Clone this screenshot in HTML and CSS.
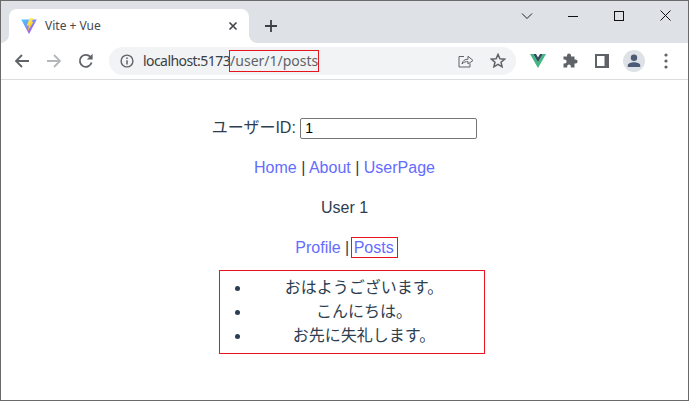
FILE: index.html
```html
<!DOCTYPE html>
<html lang="ja">
<head>
<meta charset="utf-8">
<title>Vite + Vue</title>
<link rel="stylesheet" href="styles.css">
</head>
<body>
<div class="window">
  <div class="tabstrip">
    <div class="tab">
      <svg class="favicon" width="16" height="16" viewBox="0 0 16 16">
        <defs>
          <linearGradient id="vl" x1="0" y1="0" x2="1" y2="1"><stop offset="0" stop-color="#41d1ff"/><stop offset="1" stop-color="#bd34fe"/></linearGradient>
          <linearGradient id="vb" x1="0" y1="0" x2="0.4" y2="1"><stop offset="0" stop-color="#ffea83"/><stop offset="0.5" stop-color="#ffdd35"/><stop offset="1" stop-color="#ffa800"/></linearGradient>
        </defs>
        <path d="M0.2 1.6 L15.8 1.6 L8.3 15.6 Q8 16 7.7 15.6 Z" fill="url(#vl)"/>
        <path d="M8.6 0.2 L12.4 0.2 L10.6 4 L12.6 3.6 L6.8 13.4 L7.8 7.4 L5.6 7.8 Z" fill="url(#vb)"/>
      </svg>
      <span class="tab-title">Vite + Vue</span>
      <svg class="tab-close" width="10" height="10" viewBox="0 0 10 10"><path d="M1.5 1.5 L8.5 8.5 M8.5 1.5 L1.5 8.5" stroke="#45484d" stroke-width="1.7" fill="none"/></svg>
    </div>
    <svg class="new-tab" width="12" height="12" viewBox="0 0 12 12"><path d="M6 0 V12 M0 6 H12" stroke="#3c4043" stroke-width="1.8" fill="none"/></svg>
    <div class="window-controls">
      <span class="win-btn"><svg width="12" height="8" viewBox="0 0 12 8"><path d="M1 1.5 L6 6.5 L11 1.5" stroke="#222" stroke-width="1" fill="none"/></svg></span>
      <span class="win-btn"><svg width="10" height="10" viewBox="0 0 10 10"><path d="M0 5.5 H10" stroke="#111" stroke-width="1" fill="none"/></svg></span>
      <span class="win-btn"><svg width="10" height="10" viewBox="0 0 10 10"><rect x="0.5" y="0.5" width="9" height="9" stroke="#111" stroke-width="1" fill="none"/></svg></span>
      <span class="win-btn"><svg width="11" height="11" viewBox="0 0 11 11"><path d="M0.5 0.5 L10.5 10.5 M10.5 0.5 L0.5 10.5" stroke="#111" stroke-width="1" fill="none"/></svg></span>
    </div>
  </div>
  <div class="toolbar">
    <span class="tool"><svg width="16" height="16" viewBox="0 0 16 16"><path d="M15 8 H2 M8 2 L2 8 L8 14" stroke="#5f6368" stroke-width="1.8" fill="none"/></svg></span>
    <span class="tool"><svg width="16" height="16" viewBox="0 0 16 16"><path d="M1 8 H14 M8 2 L14 8 L8 14" stroke="#b4b7bb" stroke-width="1.8" fill="none"/></svg></span>
    <span class="tool"><svg width="16" height="16" viewBox="0 0 16 16"><path d="M13.6 9.6 A6 6 0 1 1 12.2 3.7" stroke="#5f6368" stroke-width="1.8" fill="none"/><path d="M14.6 0.8 V6.6 H8.8 Z" fill="#5f6368"/></svg></span>
    <div class="omnibox">
      <svg class="info" width="14" height="14" viewBox="0 0 14 14"><circle cx="7" cy="7" r="5.9" stroke="#5f6368" stroke-width="1.4" fill="none"/><path d="M7 6.2 V10.4 M7 3.6 V5" stroke="#5f6368" stroke-width="1.5" fill="none"/></svg>
      <span class="url"><span class="host">localhost:5173</span><span class="path">/user/1/posts</span></span>
      <svg class="omni-share" width="16" height="14" viewBox="0 0 16 14"><path d="M6 2.5 H1 V13 H12 V9.5" stroke="#5f6368" stroke-width="1" fill="none"/><path d="M4 10 C4.5 6.5 7 5.2 10 5.2 V2.2 L15 6.5 L10 10 V7.6 C7.8 7.6 5.6 8 4 10 Z" stroke="#5f6368" stroke-width="1" fill="none"/></svg>
      <svg class="omni-star" width="16" height="15" viewBox="0 0 16 15"><path d="M8 1.4 L9.9 5.7 L14.6 6.1 L11 9.2 L12.1 13.8 L8 11.4 L3.9 13.8 L5 9.2 L1.4 6.1 L6.1 5.7 Z" stroke="#5f6368" stroke-width="1.5" fill="none"/></svg>
    </div>
    <div class="extensions">
      <span class="tool"><svg width="16" height="14" viewBox="0 0 16 14"><path d="M0 0 H3.2 L8 8.2 L12.8 0 H16 L8 14 Z" fill="#41b883"/><path d="M3.2 0 H6 L8 3.5 L10 0 H12.8 L8 8.2 Z" fill="#35495e"/></svg></span>
      <span class="tool"><svg width="15" height="15" viewBox="0 0 15 15"><path d="M0.5 3.5 H4 V2.4 A2 2 0 0 1 8 2.4 V3.5 H11.5 V6.5 H12.6 A2 2 0 0 1 12.6 10.5 H11.5 V14.5 H7.8 V13.2 A1.8 1.8 0 0 0 4.2 13.2 V14.5 H0.5 V10.6 H1.6 A2 2 0 0 0 1.6 6.6 H0.5 Z" fill="#5f6368"/></svg></span>
      <span class="tool"><svg width="14" height="14" viewBox="0 0 14 14"><rect width="14" height="14" fill="#5f6368"/><rect x="2" y="2" width="7.5" height="10" fill="#fff"/></svg></span>
      <span class="tool"><span class="avatar"><svg width="14" height="14" viewBox="0 0 14 14"><circle cx="7" cy="3.8" r="3.2" fill="#4d5b76"/><path d="M0.8 13 V11.4 C0.8 9.2 4.4 8.3 7 8.3 C9.6 8.3 13.2 9.2 13.2 11.4 V13 Z" fill="#4d5b76"/></svg></span></span>
      <span class="tool"><svg width="4" height="16" viewBox="0 0 4 16"><circle cx="2" cy="2" r="1.6" fill="#5f6368"/><circle cx="2" cy="8" r="1.6" fill="#5f6368"/><circle cx="2" cy="14" r="1.6" fill="#5f6368"/></svg></span>
    </div>
  </div>
  <main class="page">
    <p class="row"><label class="id-label">ユーザーID: <input class="id-input" type="text" value="1"></label></p>
    <p class="row"><a class="link" href="#">Home</a> | <a class="link" href="#">About</a> | <a class="link" href="#">UserPage</a></p>
    <p class="row">User 1</p>
    <p class="row"><a class="link" href="#">Profile</a> | <a class="link current" href="#">Posts</a></p>
    <div class="posts">
      <ul class="post-list">
        <li>おはようございます。</li>
        <li>こんにちは。</li>
        <li>お先に失礼します。</li>
      </ul>
    </div>
  </main>
</div>
</body>
</html>
```

FILE: styles.css
```css
* { box-sizing: border-box; }
html, body { margin: 0; padding: 0; background: #fff; }
.window {
  width: 689px;
  height: 401px;
  display: flex;
  flex-direction: column;
  border: 1px solid #6a6a6a;
  overflow: hidden;
  font-family: "Liberation Sans", "Noto Sans CJK JP", sans-serif;
  color: #2c3e50;
}
.tabstrip {
  height: 42px;
  flex: none;
  background: #dee1e6;
  display: flex;
  align-items: flex-end;
  padding-left: 8px;
}
.tab {
  position: relative;
  width: 240px;
  height: 34px;
  background: #fff;
  border-radius: 8px 8px 0 0;
  display: flex;
  align-items: center;
  padding-left: 12px;
  padding-bottom: 1px;
}
.tab::before, .tab::after {
  content: "";
  position: absolute;
  bottom: 0;
  width: 8px;
  height: 8px;
}
.tab::before { left: -8px; background: radial-gradient(circle at 0 0, #dee1e6 7.5px, #fff 8px); }
.tab::after { right: -8px; background: radial-gradient(circle at 100% 0, #dee1e6 7.5px, #fff 8px); }
.favicon { flex: none; }
.tab-title {
  margin: 1px 0 0 8px;
  font: 12px/16px "Noto Sans", sans-serif;
  color: #45484d;
  flex: 1;
}
.tab-close { flex: none; margin-right: 11px; }
.new-tab { flex: none; margin: 0 0 11px 16px; }
.window-controls {
  margin-left: auto;
  align-self: flex-start;
  display: flex;
}
.win-btn {
  width: 46px;
  height: 29px;
  display: flex;
  align-items: center;
  justify-content: center;
}
.toolbar {
  height: 37px;
  flex: none;
  background: #fff;
  border-bottom: 1px solid #dadce0;
  display: flex;
  align-items: center;
  padding: 0 0 1px 5px;
}
.tool {
  width: 32px;
  height: 32px;
  flex: none;
  display: flex;
  align-items: center;
  justify-content: center;
}
.omnibox {
  width: 407px;
  height: 28px;
  margin-left: 7px;
  background: #f1f3f4;
  border-radius: 14px;
  display: flex;
  align-items: center;
  padding-left: 11px;
}
.info { flex: none; }
.url {
  margin-left: 9px;
  font: 14px/18px "Noto Sans", sans-serif;
  white-space: nowrap;
  flex: 1;
}
.host { color: #3c4043; letter-spacing: -0.56px; }
.path {
  color: #5f6368;
  border: 1px solid #e8141c;
  padding: 0 0 1px;
  margin: 0 -1px;
}
.omni-share { flex: none; margin-right: 16px; }
.omni-star { flex: none; margin-right: 10px; }
.extensions { margin-left: 6px; display: flex; }
.avatar {
  width: 22px;
  height: 22px;
  border-radius: 50%;
  background: #dee1e6;
  display: flex;
  align-items: center;
  justify-content: center;
}
.page {
  flex: 1;
  padding-top: 36px;
  text-align: center;
  font-size: 16px;
  line-height: 24px;
  display: flex;
  flex-direction: column;
  align-items: center;
}
.row { margin: 0 0 16px; width: 100%; }
.id-input {
  width: 177px;
  height: 21px;
  padding: 1px 4px;
  border: 1px solid #767676;
  border-radius: 2px;
  font: 14px "Liberation Sans", sans-serif;
  color: #000;
  background: #fff;
  vertical-align: baseline;
}
.link { color: #646cff; text-decoration: none; }
.current {
  border: 1px solid #e8141c;
  padding: 1px 3px 1px 2px;
  margin: 0 -4px 0 -3px;
}
.posts {
  width: 266px;
  margin: -6px 0 0 15px;
  border: 1px solid #e8141c;
  padding: 5px 7px 5px 31px;
}
.post-list { margin: 0; padding: 0; }
```
